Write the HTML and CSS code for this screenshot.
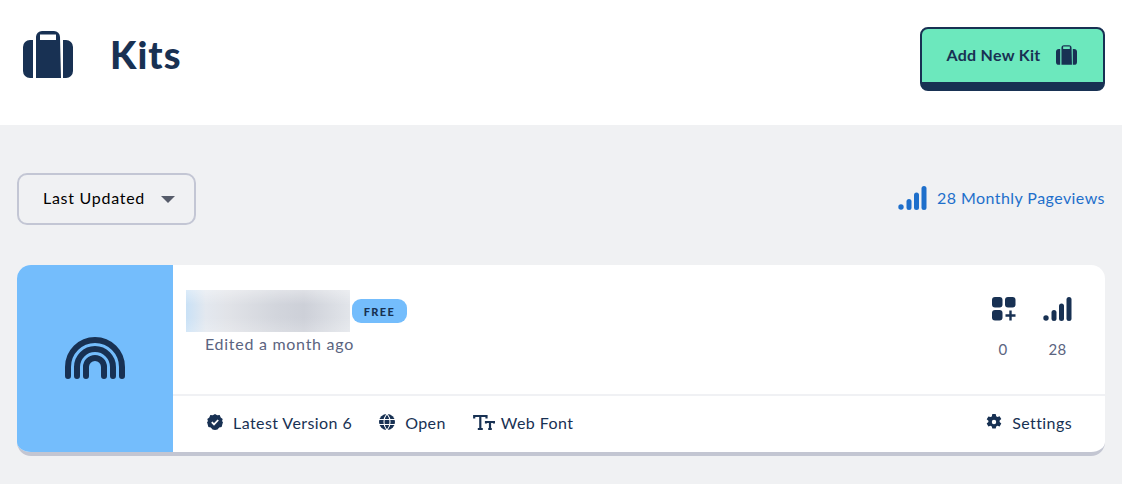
FILE: index.html
```html
<!DOCTYPE html>
<html lang="en">
<head>
<meta charset="utf-8">
<title>Kits</title>
<link rel="stylesheet" href="styles.css">
</head>
<body>
<header class="page-head">
  <div class="title-wrap">
    <svg class="title-icon" viewBox="0 0 50 47"><path d="M13 47V6a6 6 0 0 1 6-6h12a6 6 0 0 1 6 6l1 41zM17 3.500V9H33V3.500z" fill-rule="evenodd"/><path d="M10 9V47H7a7 7 0 0 1-7-7V16a7 7 0 0 1 7-7zM40 9h3a7 7 0 0 1 7 7V40a7 7 0 0 1-7 7h-3z"/></svg>
    <h1 class="title">Kits</h1>
  </div>
  <button class="add-btn">Add New Kit
    <svg class="add-icon" viewBox="0 0 50 47"><path d="M13 47V6a6 6 0 0 1 6-6h12a6 6 0 0 1 6 6l1 41zM17 3.500V9H33V3.500z" fill-rule="evenodd"/><path d="M10 9V47H7a7 7 0 0 1-7-7V16a7 7 0 0 1 7-7zM40 9h3a7 7 0 0 1 7 7V40a7 7 0 0 1-7 7h-3z"/></svg>
  </button>
</header>
<main class="content">
  <div class="toolbar">
    <button class="sort">Last Updated <span class="caret"></span></button>
    <div class="pageviews">
      <svg class="pv-icon" viewBox="0 0 29 24"><circle cx="3" cy="21" r="2.700"/><rect x="8.500" y="13" width="5" height="11" rx="2.500"/><rect x="16" y="6.500" width="5" height="17.500" rx="2.500"/><rect x="23.500" y="0" width="5" height="24" rx="2.500"/></svg>
      <span>28 Monthly Pageviews</span>
    </div>
  </div>
  <article class="card">
    <div class="thumb">
      <svg class="rainbow" viewBox="0 0 60 42"><path d="M3 39V30a27 27 0 0 1 54 0v9M12 39V30a18 18 0 0 1 36 0v9M21 39V30a9 9 0 0 1 18 0v9"/></svg>
    </div>
    <div class="card-body">
      <div class="card-top">
        <div class="card-info">
          <div class="name-row">
            <div class="name-blur"></div>
            <span class="badge">FREE</span>
          </div>
          <p class="edited">Edited a month ago</p>
        </div>
        <div class="stats">
          <div class="stat">
            <svg class="stat-add" viewBox="0 0 24 24"><rect x="0" y="0" width="10.500" height="10.500" rx="3"/><rect x="13" y="0" width="10.500" height="10.500" rx="3"/><rect x="0" y="13" width="10.500" height="10.500" rx="3"/><path d="M13.500 18.500h10M18.500 13.500v10" class="plus"/></svg>
            <span class="stat-num">0</span>
          </div>
          <div class="stat">
            <svg class="stat-bars" viewBox="0 0 29 24"><circle cx="3" cy="21" r="2.700"/><rect x="8.500" y="13" width="5" height="11" rx="2.500"/><rect x="16" y="6.500" width="5" height="17.500" rx="2.500"/><rect x="23.500" y="0" width="5" height="24" rx="2.500"/></svg>
            <span class="stat-num">28</span>
          </div>
        </div>
      </div>
      <div class="card-foot">
        <a class="foot-link">
          <svg class="foot-icon" viewBox="0 0 16 16"><path d="M8 0l2.200 1.300 2.500-.2 1 2.300 2 1.500L15 7.300 16 8l-.7 2.500-.7 2.400-2.400.7L10.500 15.500 8 16l-2.500-.5-1.700-1.900-2.400-.7-.7-2.400L0 8l1-.7-.7-2.400 2-1.500 1-2.300 2.500.2z"/><path d="M4.800 8.200l2.200 2.200 4.200-4.400" class="tick"/></svg>
          Latest Version 6
        </a>
        <a class="foot-link">
          <svg class="foot-icon" viewBox="0 0 16 16"><circle cx="8" cy="8" r="8"/><path d="M0 5.500h16M0 10.500h16M8 0c-4 4-4 12 0 16M8 0c4 4 4 12 0 16" class="globe"/></svg>
          Open
        </a>
        <a class="foot-link">
          <svg class="foot-icon-t" viewBox="0 0 22 16"><path d="M1.200 4.500V2h12.300v2.500M7.300 2V15M4.800 15H9.800M13 9.500V8h8v1.500M17 8V15M15.200 15H18.800" class="tt"/></svg>
          Web Font
        </a>
        <a class="foot-link foot-end">
          <svg class="foot-icon" viewBox="0 0 16 16"><path d="M6.300 0h3.400l.5 2.200 1.200.7 2.200-.7 1.700 2.900-1.700 1.500v1.400l1.700 1.500-1.700 2.900-2.200-.7-1.200.7-.5 2.200H6.300l-.5-2.200-1.200-.7-2.200.7-1.700-2.900 1.700-1.500V6.800L.7 5.300l1.700-2.900 2.200.7 1.200-.7zM8 5.800a2.200 2.200 0 1 0 0 4.400 2.200 2.200 0 0 0 0-4.400z" fill-rule="evenodd"/></svg>
          Settings
        </a>
      </div>
    </div>
  </article>
</main>
</body>
</html>
```
FILE: styles.css
```css
* { box-sizing: border-box; }
html, body { margin: 0; height: 100%; }
body {
  background: #f0f1f3;
  color: #183153;
  font-family: "Lato", "Open Sans", sans-serif;
  overflow: hidden;
}
.page-head {
  background: #fff;
  height: 125px;
  display: flex;
  align-items: center;
  justify-content: space-between;
  padding: 0 17px 0 23px;
}
.title-wrap { display: flex; align-items: center; gap: 37px; margin-bottom: 17px; }
.title-icon { width: 50px; height: 47px; fill: #183153; }
.title { margin: 0; font-size: 38px; font-weight: 900; line-height: 1; letter-spacing: 1px; }
.add-btn {
  width: 185px;
  height: 64px;
  margin-bottom: 7px;
  display: flex;
  align-items: center;
  justify-content: center;
  gap: 15px;
  background: #6ce8bd;
  border: 2px solid #183153;
  border-bottom-width: 9px;
  border-radius: 8px;
  color: #183153;
  font: 700 16px "Lato", sans-serif;
  letter-spacing: .3px;
  padding: 0 2px 2px 0;
}
.add-icon { width: 21px; height: 20px; fill: #183153; }
.content { padding: 48px 17px 0; }
.toolbar { display: flex; align-items: center; justify-content: space-between; height: 52px; }
.sort {
  width: 179px;
  height: 52px;
  display: flex;
  align-items: center;
  gap: 16px;
  padding: 0 0 4px 24px;
  background: transparent;
  border: 2px solid #c3c6d4;
  border-radius: 10px;
  color: #000;
  font: 400 16px "Lato", sans-serif;
  letter-spacing: .72px;
}
.caret {
  width: 0;
  height: 0;
  border-left: 7px solid transparent;
  border-right: 7px solid transparent;
  border-top: 7px solid #565c6a;
  margin-top: 4px;
}
.pageviews {
  display: flex;
  align-items: center;
  gap: 10px;
  color: #1e6fcb;
  font-size: 16px;
  letter-spacing: .44px;
  padding-bottom: 3px;
}
.pv-icon { width: 29px; height: 24px; fill: #1e6fcb; }
.card {
  margin-top: 40px;
  height: 191px;
  display: flex;
  background: #fff;
  border-radius: 14px;
  border-bottom: 4px solid #c3c6d2;
  overflow: hidden;
}
.thumb {
  width: 156px;
  background: #74bdfc;
  display: flex;
  align-items: center;
  justify-content: center;
  flex: none;
}
.rainbow {
  width: 60px;
  height: 42px;
  fill: none;
  stroke: #183153;
  stroke-width: 6px;
  stroke-linecap: round;
  margin-bottom: 1px;
}
.card-body { flex: 1; display: flex; flex-direction: column; min-width: 0; }
.card-top {
  height: 131px;
  display: flex;
  justify-content: space-between;
  padding: 25px 33px 0 13px;
  border-bottom: 2px solid #f0f1f4;
}
.name-row { display: flex; align-items: center; gap: 2px; }
.name-blur {
  width: 164px;
  height: 42px;
  background:
    linear-gradient(180deg, rgba(255,255,255,.35) 0%, rgba(255,255,255,0) 35%, rgba(255,255,255,0) 65%, rgba(255,255,255,.2) 100%),
    linear-gradient(90deg, #c9e1f6 0%, #e3e8ef 12%, #e1e3e8 25%, #d2d5dc 55%, #cdd0d8 72%, #e2e5ea 100%);
}
.badge {
  width: 55px;
  height: 24px;
  border-radius: 9px;
  background: #74bdfc;
  display: flex;
  align-items: center;
  justify-content: center;
  font-size: 11px;
  font-weight: 900;
  letter-spacing: 1.4px;
}
.edited {
  margin: 1px 0 0 19px;
  font-size: 16px;
  line-height: 22px;
  color: #5b6480;
  letter-spacing: .72px;
}
.stats { display: flex; gap: 28px; padding: 7px 0 0; }
.stat { display: flex; flex-direction: column; align-items: center; gap: 19px; width: 29px; }
.stat:first-child { width: 24px; }
.stat-add { width: 24px; height: 24px; fill: #183153; margin-left: 1px; }
.stat-bars { width: 29px; height: 24px; fill: #183153; }
.plus { fill: none; stroke: #183153; stroke-width: 2.400px; }
.stat-num { font-size: 15px; line-height: 18px; color: #5b6480; letter-spacing: .4px; }
.card-foot {
  flex: 1;
  display: flex;
  align-items: center;
  padding: 0 33px 4px 34px;
  gap: 27px;
  font-size: 16px;
  letter-spacing: .42px;
}
.foot-link { display: flex; align-items: center; gap: 10px; color: #183153; }
.foot-end { margin-left: auto; }
.foot-icon { width: 16px; height: 16px; fill: #183153; flex: none; }
.foot-icon-t { width: 22px; height: 16px; flex: none; margin-right: -4px; }
.tick { fill: none; stroke: #fff; stroke-width: 1.800px; }
.globe { fill: none; stroke: #fff; stroke-width: 1.100px; }
.tt { fill: none; stroke: #183153; stroke-width: 2.200px; }
```
